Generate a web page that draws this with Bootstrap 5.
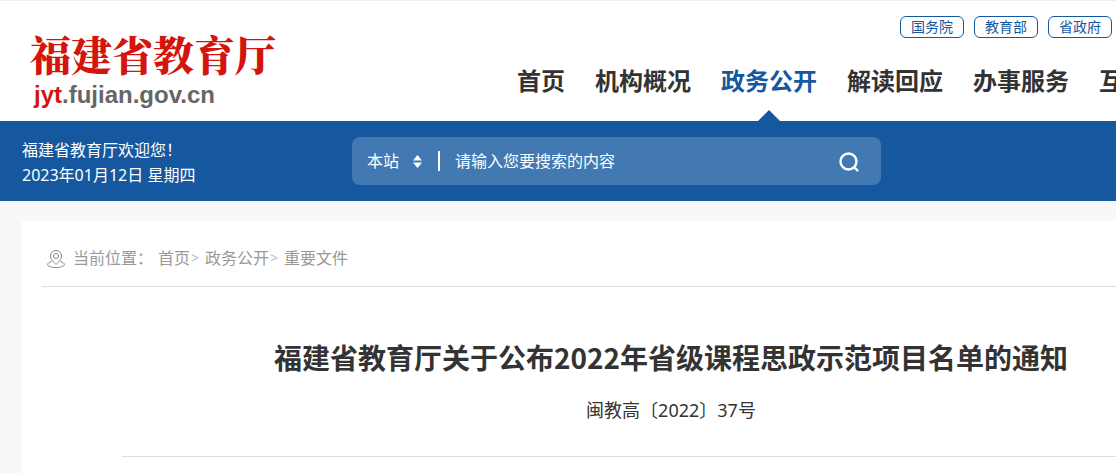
<!DOCTYPE html>
<html lang="zh-CN">
<head>
<meta charset="utf-8">
<meta name="viewport" content="width=device-width, initial-scale=1">
<title>福建省教育厅</title>
<link href="https://cdn.jsdelivr.net/npm/bootstrap@5.3.0/dist/css/bootstrap.min.css" rel="stylesheet">
<style>
  :root { --brand: #15589f; }
  body { font-family: "Noto Sans", "Noto Sans CJK SC", sans-serif; font-size: 16px; line-height: 24px; color: #333; background: #f8f8f8; overflow-x: hidden; }
  a { text-decoration: none; color: inherit; }
  .site-header { height: 121px; border-top: 1px solid #eee; padding-left: 22px; }
  .logo-link { width: 495px; padding: 26px 0 0 8px; }
  .logo-name { font-size: 41px; line-height: 53px; font-weight: 900; color: #d3150d; font-family: "Noto Serif CJK SC", "Noto Sans CJK SC", serif; }
  .logo-host { font: bold 24px/30px "Liberation Sans", sans-serif; color: #666; padding-left: 4px; }
  .logo-host span { color: #d3150d; }
  .org-links { gap: 10px; padding: 15px 4px 0 0; }
  .org-links a { width: 64px; height: 22px; border: 1px solid var(--brand); border-radius: 6px; color: var(--brand); font-size: 14px; line-height: 20px; text-align: center; }
  .main-nav { gap: 30px; font-size: 24px; font-weight: 700; white-space: nowrap; }
  .main-nav a { position: relative; height: 83px; line-height: 36px; padding-top: 25px; color: #333; }
  .main-nav a.active { color: var(--brand); }
  .main-nav a.active::after { content: ""; position: absolute; bottom: 0; left: 50%; margin-left: -11px; border: 11px solid transparent; border-top: 0; border-bottom-color: var(--brand); }
  .banner { background: var(--brand); min-height: 80px; padding-left: 22px; }
  .greeting { width: 330px; line-height: 25px; padding-top: 3px; }
  .search-box { flex: 0 1 529px; height: 48px; border-radius: 8px; background: rgba(255,255,255,.2); padding: 0 16px 0 15px; }
  .search-box select { appearance: none; background: none; border: 0; color: #fff; padding: 0; width: 46px; outline-offset: 2px; }
  .search-box select option { color: #333; }
  .search-box input { background: none; border: 0; border-left: 2px solid #fff; color: #fff; height: 20px; margin-left: 16px; padding: 0 15px; min-width: 0; }
  .search-box input::placeholder { color: #fff; opacity: 1; }
  .search-box button { background: none; border: 0; padding: 0; width: 32px; height: 32px; color: #fff; }
  .sheet { margin: 20px 0 0 22px; padding-left: 20px; }
  .crumbs { height: 66px; padding: 8px 0 0 5px; color: #999; border-bottom: 1px solid #ddd; }
  .crumbs svg { margin: 2px 8px 0 0; }
  .crumbs .place { margin-right: 5px; }
  .crumbs .sep { color: #bbb; font-size: 14px; margin: 0 6px 0 1px; }
  .doc-head { margin-left: 80px; min-width: 1098px; padding: 49px 0 33px; border-bottom: 1px solid #ddd; }
  .doc-head h1 { font: bold 28px/42px "Noto Sans CJK SC", sans-serif; margin-bottom: 19px; }
  .doc-head p { font-size: 18px; line-height: 26px; }
</style>
</head>
<body class="d-flex flex-column min-vh-100">
<header class="site-header bg-white d-flex">
  <a href="#" class="logo-link flex-shrink-0 d-flex flex-column">
    <span class="logo-name">福建省教育厅</span>
    <span class="logo-host"><span>jyt</span>.fujian.gov.cn</span>
  </a>
  <div class="flex-grow-1 overflow-hidden">
    <div class="org-links d-flex justify-content-end">
      <a href="#">国务院</a>
      <a href="#">教育部</a>
      <a href="#">省政府</a>
    </div>
    <nav class="main-nav d-flex">
      <a href="#">首页</a>
      <a href="#">机构概况</a>
      <a href="#" class="active" aria-current="page">政务公开</a>
      <a href="#">解读回应</a>
      <a href="#">办事服务</a>
      <a href="#">互动交流</a>
    </nav>
  </div>
</header>

<section class="banner d-flex align-items-center text-white">
  <div class="greeting flex-shrink-0">
    <div>福建省教育厅欢迎您！</div>
    <div>2023年01月12日 星期四</div>
  </div>
  <form class="search-box d-flex align-items-center">
    <select id="scope" aria-label="搜索范围"><option>本站</option></select>
    <svg width="9" height="13" viewBox="0 0 9 13" fill="#fff" aria-hidden="true"><path d="M4.5 0 9 5.5H0zM4.5 13 0 7.500h9z"/></svg>
    <input class="flex-grow-1" type="text" aria-label="搜索内容" placeholder="请输入您要搜索的内容">
    <button type="submit" aria-label="搜索">
      <svg width="22" height="22" viewBox="0 0 22 22" fill="none" stroke="currentColor" stroke-width="2.400" stroke-linecap="round" aria-hidden="true"><circle cx="10.500" cy="10.500" r="8"/><path d="M16.500 16.500l3 3"/></svg>
    </button>
  </form>
</section>

<main class="sheet bg-white overflow-hidden flex-grow-1">
  <nav class="crumbs d-flex align-items-center" aria-label="当前位置">
    <svg width="18" height="18" viewBox="0 0 18 18" fill="none" stroke="#888" aria-hidden="true"><path d="M9 14.500C6 11.500 3.500 9 3.500 6a5.500 5.500 0 0 1 11 0c0 3-2.500 5.500-5.500 8.500z"/><circle cx="9" cy="6" r="2.500"/><path d="M4.500 11.500C2 12.300.6 13.400.6 14.500c0 1.700 3.700 3 8.400 3s8.400-1.300 8.400-3c0-1.100-1.400-2.200-3.900-3"/></svg>
    <span class="place">当前位置：</span>
    <a href="#">首页</a><span class="sep">&gt;</span>
    <a href="#">政务公开</a><span class="sep">&gt;</span>
    <a href="#">重要文件</a>
  </nav>
  <article class="doc-head text-center">
    <h1>福建省教育厅关于公布2022年省级课程思政示范项目名单的通知</h1>
    <p class="mb-0">闽教高〔2022〕37号</p>
  </article>
</main>
<script src="https://cdn.jsdelivr.net/npm/bootstrap@5.3.0/dist/js/bootstrap.bundle.min.js"></script>
</body>
</html>
